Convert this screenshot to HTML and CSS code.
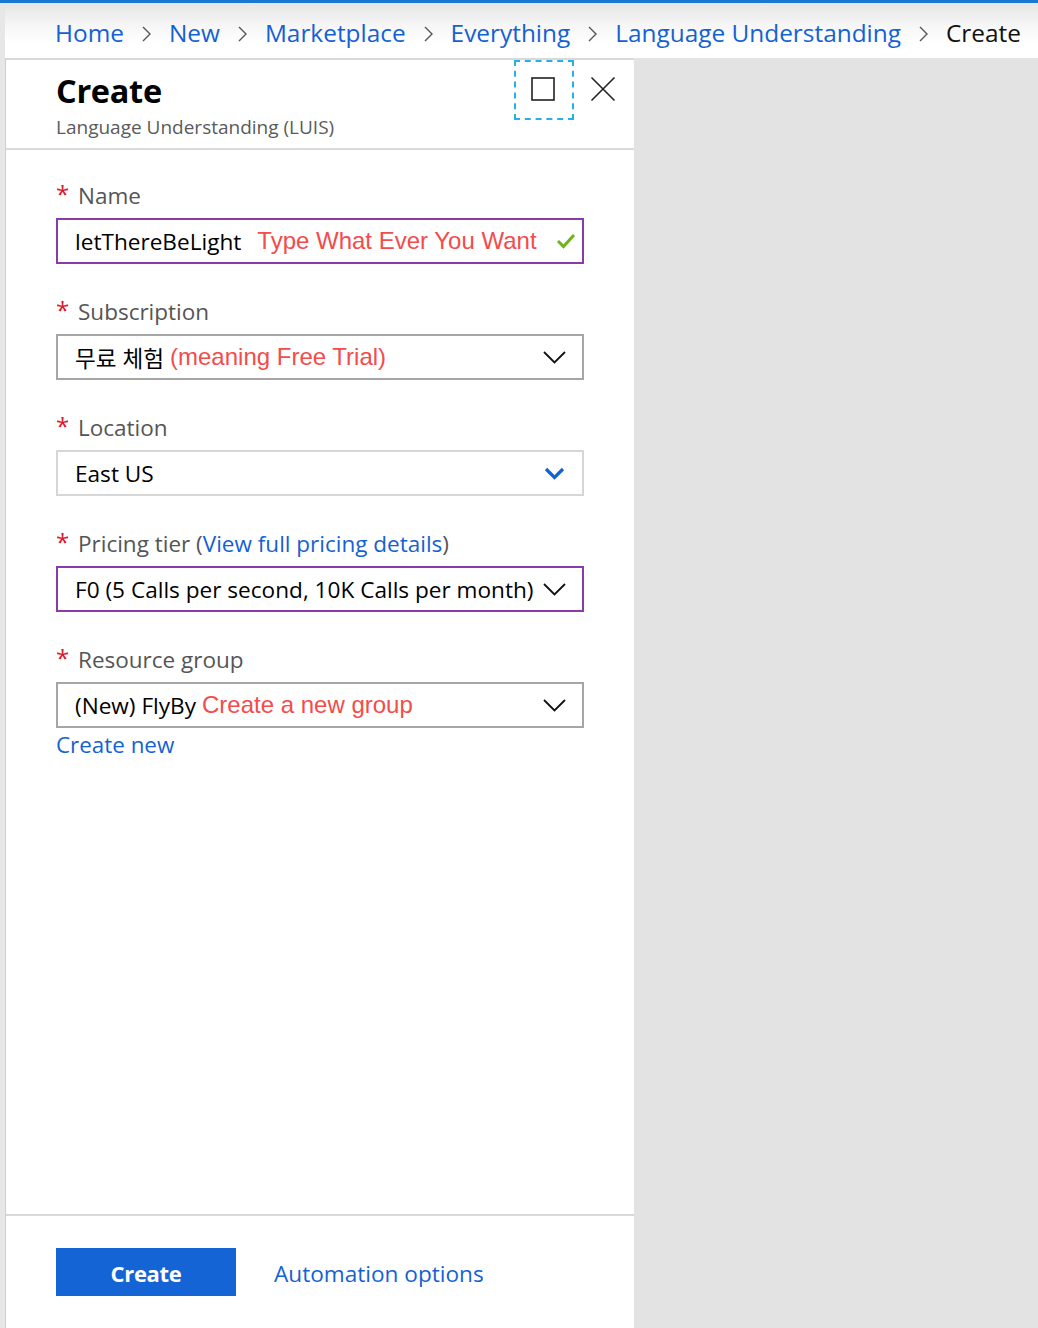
FILE: index.html
```html
<!DOCTYPE html>
<html lang="en">
<head>
<meta charset="utf-8">
<title>Create - Language Understanding</title>
<link rel="stylesheet" href="styles.css">
</head>
<body>
<div class="rail"></div>
<div class="page">
  <header class="topbar">
    <nav class="crumbs">
      <a class="crumb">Home</a>
      <svg class="sep" width="9" height="16" viewBox="0 0 9 16"><polyline points="1,1 8,8 1,15" fill="none" stroke="#555" stroke-width="1.4"/></svg>
      <a class="crumb">New</a>
      <svg class="sep" width="9" height="16" viewBox="0 0 9 16"><polyline points="1,1 8,8 1,15" fill="none" stroke="#555" stroke-width="1.4"/></svg>
      <a class="crumb">Marketplace</a>
      <svg class="sep" width="9" height="16" viewBox="0 0 9 16"><polyline points="1,1 8,8 1,15" fill="none" stroke="#555" stroke-width="1.4"/></svg>
      <a class="crumb">Everything</a>
      <svg class="sep" width="9" height="16" viewBox="0 0 9 16"><polyline points="1,1 8,8 1,15" fill="none" stroke="#555" stroke-width="1.4"/></svg>
      <a class="crumb">Language Understanding</a>
      <svg class="sep" width="9" height="16" viewBox="0 0 9 16"><polyline points="1,1 8,8 1,15" fill="none" stroke="#555" stroke-width="1.4"/></svg>
      <span class="crumb current">Create</span>
    </nav>
  </header>
  <div class="workspace">
    <section class="blade">
      <div class="blade-head">
        <div class="titles">
          <h1 class="title">Create</h1>
          <p class="subtitle">Language Understanding (LUIS)</p>
        </div>
        <div class="actions">
          <div class="maximize">
            <svg width="24" height="24" viewBox="0 0 24 24"><rect x="1" y="1" width="22" height="22" fill="none" stroke="#222" stroke-width="1.6"/></svg>
          </div>
          <div class="close">
            <svg width="26" height="26" viewBox="0 0 26 26"><path d="M1.5 1.5 L24.5 24.5 M24.5 1.5 L1.5 24.5" fill="none" stroke="#222" stroke-width="1.6"/></svg>
          </div>
        </div>
      </div>

      <div class="blade-body">
        <div class="field">
          <div class="label"><span class="req">*</span><span>Name</span></div>
          <div class="control focus">
            <span class="value">letThereBeLight</span>
            <span class="note gap">Type What Ever You Want</span>
            <svg class="check" width="20" height="16" viewBox="0 0 20 16"><polyline points="2,8 7.5,13.5 18,2" fill="none" stroke="#6cb31c" stroke-width="3"/></svg>
          </div>
        </div>

        <div class="field">
          <div class="label"><span class="req">*</span><span>Subscription</span></div>
          <div class="control dark">
            <span class="value">무료 체험</span>
            <span class="note">(meaning Free Trial)</span>
            <svg class="chev" width="23" height="13" viewBox="0 0 23 13"><polyline points="1,1 11.5,11.5 22,1" fill="none" stroke="#111" stroke-width="1.8"/></svg>
          </div>
        </div>

        <div class="field">
          <div class="label"><span class="req">*</span><span>Location</span></div>
          <div class="control light">
            <span class="value">East US</span>
            <svg class="chev blue" width="21" height="13" viewBox="0 0 21 13"><polyline points="2,2 10.5,10.5 19,2" fill="none" stroke="#1263d3" stroke-width="3.2"/></svg>
          </div>
        </div>

        <div class="field">
          <div class="label"><span class="req">*</span><span>Pricing tier (<a class="link">View full pricing details</a>)</span></div>
          <div class="control focus">
            <span class="value">F0 (5 Calls per second, 10K Calls per month)</span>
            <svg class="chev" width="23" height="13" viewBox="0 0 23 13"><polyline points="1,1 11.5,11.5 22,1" fill="none" stroke="#111" stroke-width="1.8"/></svg>
          </div>
        </div>

        <div class="field last">
          <div class="label"><span class="req">*</span><span>Resource group</span></div>
          <div class="control dark">
            <span class="value">(New) FlyBy</span>
            <span class="note">Create a new group</span>
            <svg class="chev" width="23" height="13" viewBox="0 0 23 13"><polyline points="1,1 11.5,11.5 22,1" fill="none" stroke="#111" stroke-width="1.8"/></svg>
          </div>
          <a class="link create-new">Create new</a>
        </div>
      </div>

      <footer class="blade-foot">
        <button class="primary" type="button">Create</button>
        <a class="link automation">Automation options</a>
      </footer>
    </section>
    <div class="backdrop"></div>
  </div>
</div>
</body>
</html>
```

FILE: styles.css
```css
* { box-sizing: border-box; }

html, body { margin: 0; padding: 0; }

body {
  height: 1328px;
  overflow: hidden;
  display: flex;
  border-top: 3px solid #1a78d2;
  background: #e3e3e3;
  font-family: "Open Sans", "Noto Sans", "Noto Sans CJK KR", sans-serif;
  color: #000;
}

.rail {
  width: 5px;
  flex: none;
  background: #e7e7e7;
}

.page {
  flex: 1;
  display: flex;
  flex-direction: column;
  min-width: 0;
}

.topbar {
  height: 55px;
  flex: none;
  background: linear-gradient(#e5e5e5 0%, #f6f6f6 40%, #ffffff 75%);
  padding-left: 50px;
  display: flex;
  align-items: center;
  padding-top: 5px;
}

.crumbs {
  display: flex;
  align-items: center;
  gap: 18px;
  font-size: 24.4px;
  line-height: 32px;
  white-space: nowrap;
}

.crumb { color: #1461d4; text-decoration: none; }
.crumb.current { color: #111; }
.sep { flex: none; margin-top: 2px; }

.workspace {
  flex: 1;
  display: flex;
  min-height: 0;
}

.blade {
  width: 629px;
  flex: none;
  background: #fff;
  border-left: 1px solid #cfcfcf;
  border-top: 2px solid #d8d8d8;
  display: flex;
  flex-direction: column;
}

.backdrop { flex: 1; background: #e3e3e3; }

.blade-head {
  height: 90px;
  flex: none;
  border-bottom: 2px solid #dadada;
  display: flex;
  justify-content: space-between;
  padding-left: 50px;
  padding-right: 18px;
}

.titles { padding-top: 10px; }

.title {
  margin: 0;
  font-size: 32.5px;
  line-height: 42px;
  font-weight: 700;
  color: #000;
  letter-spacing: -0.3px;
}

.subtitle {
  margin: 2px 0 0;
  font-size: 19px;
  line-height: 26px;
  color: #5a5a5a;
}

.actions {
  display: flex;
  align-items: flex-start;
}

.maximize {
  width: 60px;
  height: 60px;
  border: 2px dashed #26b0e6;
  display: flex;
  align-items: center;
  justify-content: center;
  margin-right: 16px;
}
.maximize svg { margin-left: -2px; margin-top: -2px; }

.close {
  padding-top: 16px;
}

.blade-body {
  flex: 1;
  padding: 32px 50px 0;
}

.field { margin-bottom: 34px; }
.field.last { margin-bottom: 0; }

.label {
  display: flex;
  align-items: center;
  height: 28px;
  font-size: 22.5px;
  line-height: 28px;
  color: #555;
  margin-bottom: 8px;
}

.req {
  color: #e0142a;
  width: 22px;
  flex: none;
  font-size: 24px;
  position: relative;
  top: -2px;
}

.control {
  height: 46px;
  width: 528px;
  border: 2px solid #a8a8a8;
  display: flex;
  align-items: center;
  padding-left: 17px;
  padding-right: 16px;
  font-size: 22.6px;
  white-space: nowrap;
}
.control.focus { border-color: #8a3ba5; }
.control.light { border-color: #d6d6d6; }
.control.dark { border-color: #a6a6a6; }

.value {
  color: #000;
  font-family: "Open Sans", "Noto Sans CJK KR", sans-serif;
}

.note {
  color: #f44b4b;
  font-family: "Liberation Sans", Arial, sans-serif;
  font-size: 24px;
  margin-left: 6px;
}
.note.gap { margin-left: 16px; }

.check { margin-left: auto; margin-right: -10px; }
.chev { margin-left: auto; }
.chev.blue { margin-right: 1px; }

.link {
  color: #1462d2;
  text-decoration: none;
}

.create-new {
  display: block;
  font-size: 22.4px;
  line-height: 28px;
  margin-top: 3px;
}

.blade-foot {
  height: 114px;
  flex: none;
  border-top: 2px solid #d9d9d9;
  padding: 32px 50px 0;
  display: flex;
  align-items: flex-start;
  gap: 38px;
}

.primary {
  width: 180px;
  height: 48px;
  border: none;
  background: #1464d6;
  color: #fff;
  font-family: "Open Sans", sans-serif;
  font-size: 22px;
  line-height: 50px;
  font-weight: 700;
  letter-spacing: -0.3px;
  padding: 0;
}

.automation {
  font-size: 22.6px;
  line-height: 52px;
}
```
